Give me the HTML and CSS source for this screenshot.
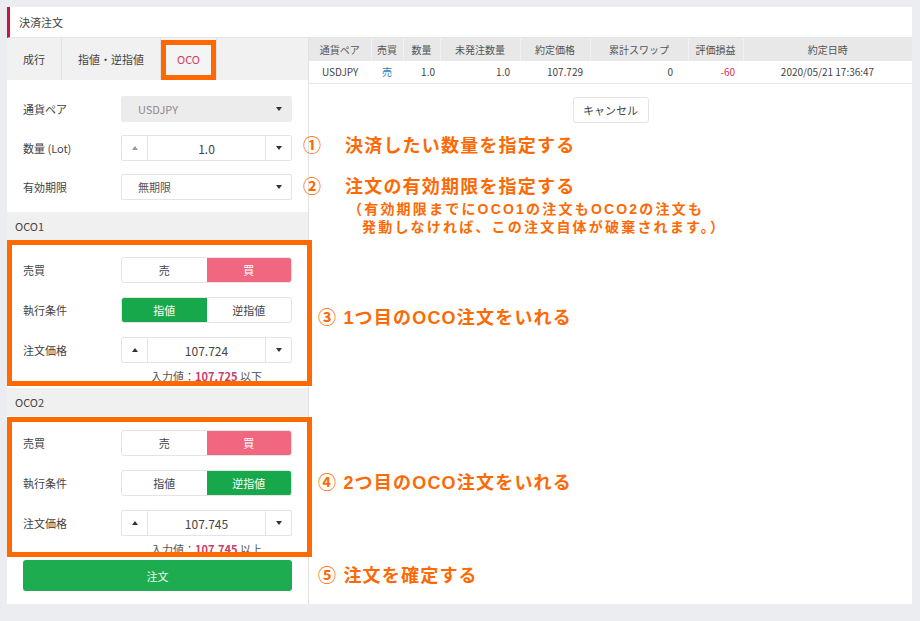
FILE: index.html
```html
<!DOCTYPE html>
<html lang="ja">
<head>
<meta charset="utf-8">
<title>決済注文</title>
<link rel="stylesheet" href="styles.css">
</head>
<body>
<div class="page">
  <div class="panel">
    <div class="panel-head">決済注文</div>
    <div class="panel-main">
      <div class="order-col">
        <div class="tabs">
          <div class="tab">成行</div>
          <div class="tab">指値・逆指値</div>
          <div class="tab active">OCO</div>
        </div>
        <div class="form">
          <div class="row">
            <div class="label">通貨ペア</div>
            <div class="ctrl select disabled"><span>USDJPY</span><span class="tri-down"></span></div>
          </div>
          <div class="row">
            <div class="label">数量 (Lot)</div>
            <div class="ctrl spin">
              <div class="spin-btn up"><span class="tri-up dim"></span></div>
              <div class="spin-val">1.0</div>
              <div class="spin-btn down"><span class="tri-down"></span></div>
            </div>
          </div>
          <div class="row">
            <div class="label">有効期限</div>
            <div class="ctrl select"><span>無期限</span><span class="tri-down"></span></div>
          </div>
        </div>

        <div class="sec-head">OCO1</div>
        <div class="sec-body first">
          <div class="row">
            <div class="label">売買</div>
            <div class="ctrl toggle"><div>売</div><div class="buy-on">買</div></div>
          </div>
          <div class="row">
            <div class="label">執行条件</div>
            <div class="ctrl toggle"><div class="green-on">指値</div><div>逆指値</div></div>
          </div>
          <div class="row">
            <div class="label">注文価格</div>
            <div class="ctrl spin">
              <div class="spin-btn up"><span class="tri-up"></span></div>
              <div class="spin-val">107.724</div>
              <div class="spin-btn down"><span class="tri-down"></span></div>
            </div>
          </div>
          <div class="hint">入力値：<b>107.725</b> 以下</div>
        </div>

        <div class="sec-head">OCO2</div>
        <div class="sec-body second">
          <div class="row">
            <div class="label">売買</div>
            <div class="ctrl toggle"><div>売</div><div class="buy-on">買</div></div>
          </div>
          <div class="row">
            <div class="label">執行条件</div>
            <div class="ctrl toggle"><div>指値</div><div class="green-on">逆指値</div></div>
          </div>
          <div class="row">
            <div class="label">注文価格</div>
            <div class="ctrl spin">
              <div class="spin-btn up"><span class="tri-up"></span></div>
              <div class="spin-val">107.745</div>
              <div class="spin-btn down"><span class="tri-down"></span></div>
            </div>
          </div>
          <div class="hint">入力値：<b>107.745</b> 以上</div>
        </div>

        <button class="submit">注文</button>
      </div>

      <div class="pos-col">
        <table class="pos-table">
          <colgroup>
            <col class="c1"><col class="c2"><col class="c3"><col class="c4"><col class="c5"><col class="c6"><col class="c7"><col>
          </colgroup>
          <thead>
            <tr><th>通貨ペア</th><th>売買</th><th>数量</th><th>未発注数量</th><th>約定価格</th><th>累計スワップ</th><th>評価損益</th><th>約定日時</th></tr>
          </thead>
          <tbody>
            <tr><td>USDJPY</td><td class="sell">売</td><td>1.0</td><td>1.0</td><td>107.729</td><td>0</td><td class="loss">-60</td><td>2020/05/21 17:36:47</td></tr>
          </tbody>
        </table>
        <div class="cancel-wrap"><button class="cancel">キャンセル</button></div>
      </div>
    </div>
  </div>

  <div class="hl hl-tab"></div>
  <div class="hl hl-oco1"></div>
  <div class="hl hl-oco2"></div>

  <div class="ann a1"><span class="num">①</span>決済したい数量を指定する</div>
  <div class="ann a2"><span class="num">②</span>注文の有効期限を指定する</div>
  <div class="ann sub s1">（有効期限までにOCO1の注文もOCO2の注文も</div>
  <div class="ann sub s2">発動しなければ、この注文自体が破棄されます。）</div>
  <div class="ann a3">③ 1つ目のOCO注文をいれる</div>
  <div class="ann a4">④ 2つ目のOCO注文をいれる</div>
  <div class="ann a5">⑤ 注文を確定する</div>
</div>
</body>
</html>
```
FILE: styles.css
```css
* { box-sizing: border-box; }
html, body { margin: 0; padding: 0; }
body {
  background: #ebedf0;
  font-family: "Noto Sans CJK JP", "Noto Sans", sans-serif;
  font-size: 11px;
  color: #444;
}
.page {
  position: relative;
  width: 920px;
  height: 621px;
  padding: 7px 0 0 7px;
}
.panel {
  width: 905px;
  height: 597px;
  background: #fff;
  display: flex;
  flex-direction: column;
}
.panel-head {
  height: 31px;
  border-left: 3px solid #c8163c;
  border-bottom: 1px solid #e6e6e6;
  padding-left: 9px;
  display: flex;
  align-items: center;
  color: #444;
}
.panel-main { flex: 1; display: flex; }

/* left order column */
.order-col {
  width: 302px;
  border-right: 1px solid #e2e2e2;
  display: flex;
  flex-direction: column;
}
.tabs {
  height: 42px;
  background: #f1f1f1;
  display: flex;
}
.tab {
  padding: 0 16px;
  display: flex;
  align-items: center;
  border-right: 1px solid #e2e2e2;
  color: #444;
}
.tab.active { color: #d23a5e; background: #f4f4f4; }

.form {
  padding: 16px 16px 12px;
  display: flex;
  flex-direction: column;
  gap: 13px;
}
.row { display: flex; align-items: center; height: 26px; }
.label { width: 98px; color: #444; }
.ctrl { width: 171px; height: 26px; }

.select {
  display: flex;
  align-items: center;
  justify-content: space-between;
  padding: 0 9px 0 16px;
  border: 1px solid #e4e4e4;
  border-radius: 2px;
  color: #555;
}
.select.disabled { background: #ececec; border-color: #ececec; color: #8a8a8a; }

.spin {
  display: flex;
  border: 1px solid #e4e4e4;
  border-radius: 2px;
}
.spin-btn {
  width: 26px;
  display: flex;
  align-items: center;
  justify-content: center;
}
.spin-btn.up { border-right: 1px solid #e4e4e4; }
.spin-btn.down { border-left: 1px solid #e4e4e4; }
.spin-val {
  flex: 1;
  display: flex;
  align-items: center;
  justify-content: center;
  font-size: 12px;
  color: #444;
}
.tri-up, .tri-down {
  display: inline-block;
  width: 0;
  height: 0;
  border-left: 3px solid transparent;
  border-right: 3px solid transparent;
}
.tri-up { border-bottom: 4px solid #333; }
.tri-up.dim { border-bottom-color: #999; }
.tri-down { border-top: 4px solid #333; }

.toggle {
  display: flex;
  border: 1px solid #e4e4e4;
  border-radius: 3px;
  overflow: hidden;
}
.toggle > div {
  flex: 1;
  display: flex;
  align-items: center;
  justify-content: center;
  color: #444;
}
.toggle > .buy-on { background: #f0677f; color: #fff; }
.toggle > .green-on { background: #17a84b; color: #fff; }

.sec-head {
  height: 28px;
  background: #f0f0f0;
  padding-left: 8px;
  display: flex;
  align-items: center;
  color: #444;
}
.sec-body {
  padding: 17px 16px 4px;
  display: flex;
  flex-direction: column;
  gap: 14px;
}
.sec-body.second { padding-top: 14px; padding-bottom: 0; }
.hint {
  margin: -9px 0 0 98px;
  width: 171px;
  height: 16px;
  line-height: 16px;
  text-align: center;
  color: #555;
}
.hint b { color: #c8406a; font-weight: 700; }

.submit {
  margin: 3px 16px 0;
  height: 31px;
  border: none;
  border-radius: 3px;
  background: #1dac4f;
  color: #e8f6ec;
  font-family: inherit;
  font-size: 11px;
}

/* right positions column */
.pos-col { flex: 1; display: flex; flex-direction: column; }
.pos-table {
  width: 100%;
  border-collapse: collapse;
  table-layout: fixed;
  font-size: 10px;
}
.pos-table .c1 { width: 62px; }
.pos-table .c2 { width: 32px; }
.pos-table .c3 { width: 37px; }
.pos-table .c4 { width: 80px; }
.pos-table .c5 { width: 70px; }
.pos-table .c6 { width: 98px; }
.pos-table .c7 { width: 55px; }
.pos-table th {
  height: 23px;
  background: #e8e8e8;
  font-weight: normal;
  color: #555;
  text-align: center;
  border-left: 1px solid #f2f2f2;
  padding: 0;
}
.pos-table th:first-child { border-left: none; }
.pos-table td {
  height: 22px;
  border-bottom: 1px solid #e6e6e6;
  color: #444;
  text-align: right;
  padding: 0 8px 0 0;
}
.pos-table td:nth-child(1) { text-align: left; padding: 0 0 0 13px; }
.pos-table td:nth-child(2) { text-align: center; padding: 0; }
.pos-table td:nth-child(3) { padding-right: 5px; }
.pos-table td:nth-child(4) { padding-right: 10px; }
.pos-table td:nth-child(5) { padding-right: 7px; }
.pos-table td:nth-child(6) { padding-right: 15px; }
.pos-table td:nth-child(8) { text-align: center; padding: 0; }
.pos-table td.sell { color: #2a7fb8; }
.pos-table td.loss { color: #d9304f; }

.cancel-wrap { display: flex; justify-content: center; padding-top: 13px; }
.cancel {
  width: 76px;
  height: 26px;
  background: #fff;
  border: 1px solid #e4e4e4;
  border-radius: 3px;
  color: #444;
  font-family: inherit;
  font-size: 11px;
}

/* annotation overlays */
.hl { position: absolute; border: 5px solid #ff6a00; }
.hl-tab { left: 161px; top: 40px; width: 55px; height: 40px; }
.hl-oco1 { left: 7px; top: 240px; width: 305px; height: 146px; }
.hl-oco2 { left: 7px; top: 417px; width: 305px; height: 140px; }

.ann {
  position: absolute;
  color: #fd6a05;
  font-family: "Liberation Sans", "Noto Sans CJK JP", sans-serif;
  font-weight: 700;
  font-size: 18px;
  letter-spacing: 1.2px;
  line-height: 20px;
  white-space: nowrap;
}
.ann .num { display: inline-block; width: 42px; }
.a1 { left: 303px; top: 136px; }
.a2 { left: 303px; top: 177px; }
.sub { font-size: 14px; letter-spacing: 2.2px; line-height: 18px; }
.s1 { left: 348px; top: 200px; }
.s2 { left: 362px; top: 218px; }
.a3 { left: 318px; top: 308px; }
.a4 { left: 318px; top: 473px; }
.a5 { left: 318px; top: 566px; }
```
